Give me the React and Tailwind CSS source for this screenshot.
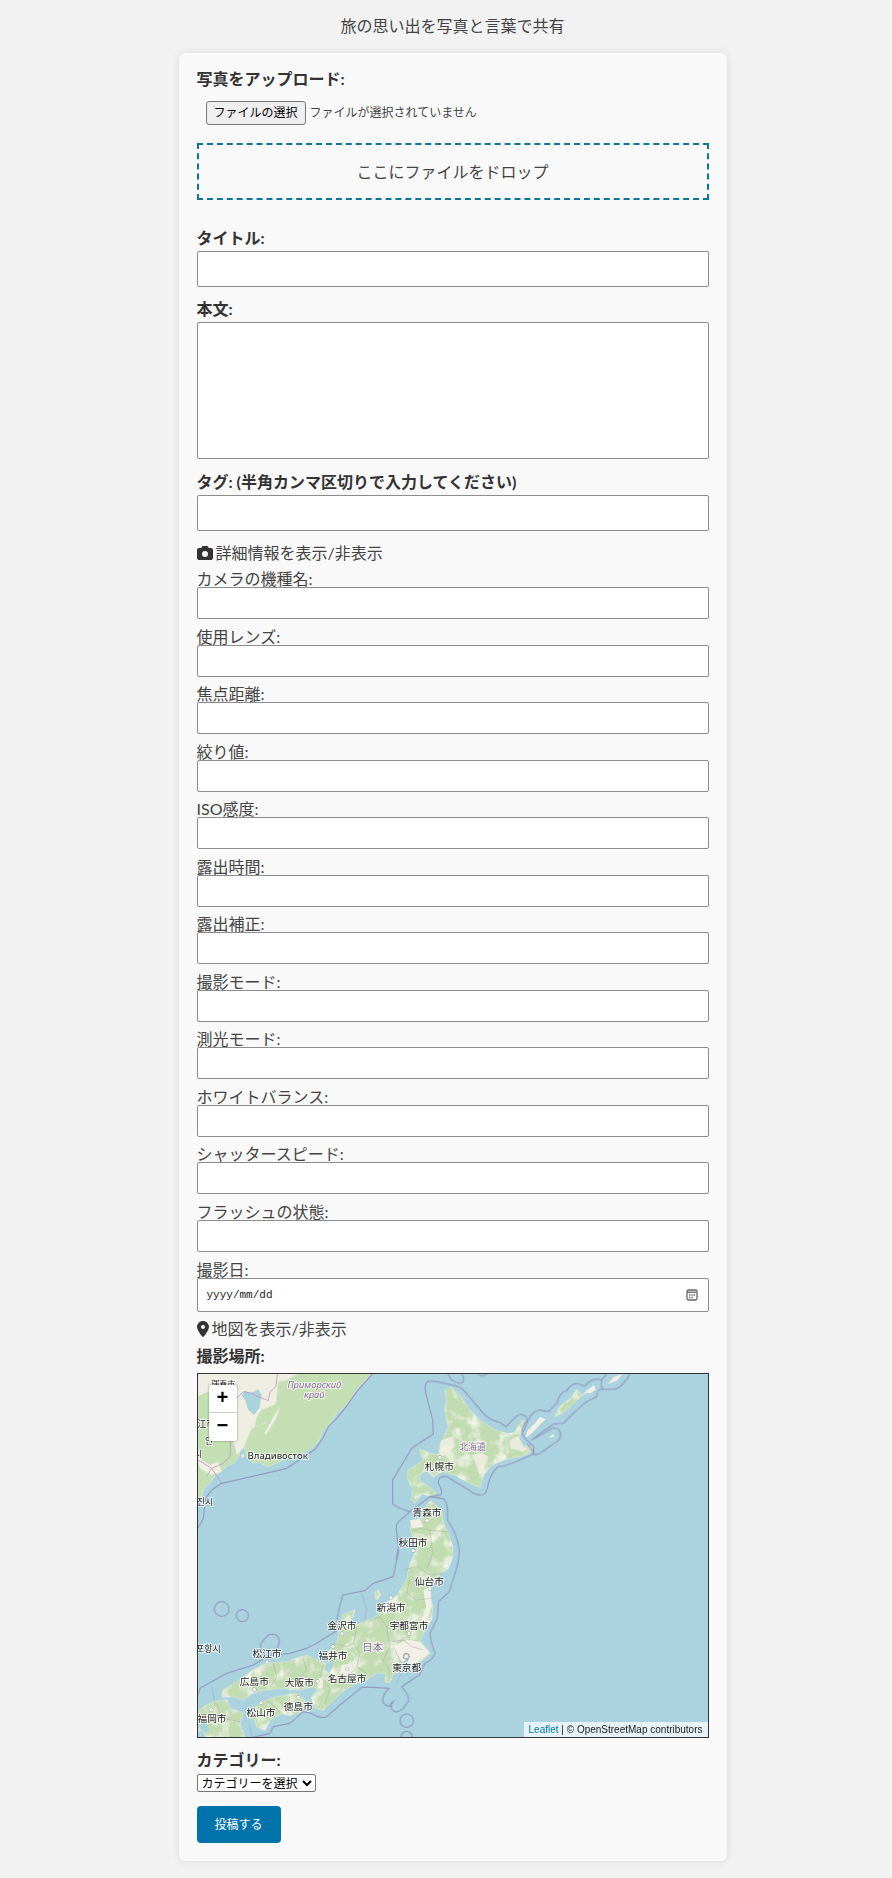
import React, { useState } from 'react';
import { FaCamera, FaLocationDot } from 'react-icons/fa6';

const DETAILS = [
  ['camera', 'カメラの機種名:'],
  ['lens', '使用レンズ:'],
  ['focal', '焦点距離:'],
  ['aperture', '絞り値:'],
  ['iso', 'ISO感度:'],
  ['exposure', '露出時間:'],
  ['compensation', '露出補正:'],
  ['mode', '撮影モード:'],
  ['metering', '測光モード:'],
  ['whitebalance', 'ホワイトバランス:'],
  ['shutter', 'シャッタースピード:'],
  ['flash', 'フラッシュの状態:'],
];

const CITIES = [
  ['札幌市', 748, 331, 750, 292],
  ['青森市', 711, 468, 711, 481],
  ['秋田市', 669, 558, 669, 572],
  ['仙台市', 718, 674, 720, 686],
  ['新潟市', 603, 754, 603, 713],
  ['宇都宮市', 657, 808, 657, 821],
  ['金沢市', 456, 808, 456, 821],
  ['松江市', 231, 892, 231, 906],
  ['福井市', 429, 898, 429, 859],
  ['東京都', 650, 933, 649, 889],
  ['名古屋市', 471, 966, 471, 927],
  ['広島市', 193, 976, 193, 989],
  ['大阪市', 328, 978, 383, 964],
  ['徳島市', 325, 1050, 325, 1012],
  ['松山市', 213, 1067, 213, 1028],
  ['福岡市', 66, 1087, 64, 1049],
];

const box = 'block w-full rounded-xs border border-[#8c8c8c] bg-white px-[9px] outline-none';
const heading = 'block font-bold leading-[18px] text-[#333]';

function Field({ id, label }) {
  return (
    <div className="pt-[9px] even:pt-2.5">
      <label htmlFor={id} className="block h-4 leading-4">{label}</label>
      <input id={id} type="text" className={`${box} relative h-8`} />
    </div>
  );
}

function CalendarIcon() {
  return (
    <svg viewBox="0 0 12 12" className="size-3" aria-hidden="true">
      <rect x="1" y="1" width="10" height="10" rx="1.5" fill="#fff" stroke="#666" strokeWidth="1.3" />
      <path d="M1 2.5H11V4H1Z" fill="#777" />
      <path d="M3.2 6H4.4M5.4 6H6.6M7.6 6H9M3.2 8.5H4.4M5.4 8.5H6.6" stroke="#555" strokeWidth="1.4" />
    </svg>
  );
}

function MapDrawing() {
  return (
    <svg viewBox="24 42 1530 1089" preserveAspectRatio="xMinYMin slice" className="block h-[363px] w-full bg-[#aad3df]" role="img" aria-label="日本">
      <defs>
        <filter id="patch" x="0" y="0" width="100%" height="100%">
          <feTurbulence type="fractalNoise" baseFrequency="0.025" numOctaves="4" seed="8" />
          <feColorMatrix values="0 0 0 0 0.94  0 0 0 0 0.94  0 0 0 0 0.86  2.6 0 0 0 -1.25" />
          <feComposite in2="SourceGraphic" operator="in" result="n" />
          <feMerge>
            <feMergeNode in="SourceGraphic" />
            <feMergeNode in="n" />
          </feMerge>
        </filter>
      </defs>
      <path fill="#c3dfb3" stroke="#d3e4cd" strokeWidth="3" d="M20 38H548L500 90L475 130L440 160L418 195L400 212L385 245L358 270L310 288L270 305L232 320L205 306L190 310L170 290L162 265L150 262L148 285L130 310L110 318L95 335L75 345L60 370L42 385L35 405L20 430Z" />
      <g fill="#c2dcb2" stroke="#d3e4cd" strokeWidth="3" strokeLinejoin="round" filter="url(#patch)">
        <path transform="translate(570 0)" d="M195 92L215 80L225 95L240 105L265 145L300 180L345 210L385 222L405 218L420 190L430 180L428 205L415 235L430 258L455 262L448 280L420 290L375 298L335 315L310 345L300 382L270 370L225 345L190 335L175 340L160 352L140 330L118 345L120 365L145 378L168 400L150 408L125 400L105 430L95 420L98 385L82 355L85 330L110 315L130 300L118 268L150 280L178 285L180 250L190 235L205 200L195 150L200 120Z" />
        <path d="M700 450L720 424L735 432L755 450L760 490L775 520L788 560L788 590L775 625L750 640L730 670L710 695L728 735L725 775L705 810L690 840L720 880L705 895L688 905L682 925L660 915L650 905L635 910L625 935L610 940L600 968L585 965L588 940L560 938L530 960L500 968L470 985L440 1010L420 1030L400 1050L375 1045L365 1010L385 990L370 980L330 990L280 985L220 990L185 1000L160 1020L130 1010L95 1010L100 990L150 960L190 930L230 910L290 905L350 885L390 905L415 910L420 870L440 850L450 810L458 765L495 748L488 772L470 790L500 795L550 775L600 735L625 700L650 660L660 610L680 570L670 540L660 500L672 480L695 476Z" />
        <path d="M170 1070L190 1050L215 1025L260 1010L320 1000L345 1020L335 1055L300 1065L275 1060L240 1080L225 1110L200 1100L195 1080Z" />
        <path d="M20 1060L40 1040L70 1025L110 1020L120 1045L160 1060L150 1090L165 1135H50L38 1110L20 1115Z" />
        <path d="M555 695L565 690L572 702L560 720L555 710Z" />
        <path transform="translate(750 0)" d="M345 170L360 140L400 108L408 88L425 105L440 98L410 120L380 150Z" />
      </g>
      <g fill="#f2efe6">
        <path opacity=".9" d="M20 38H330L290 60L265 65L258 130L235 145L225 190L185 205L160 265L140 285L130 240L57 230L30 190H20Z" />
        <path d="M262 150L270 140L258 175L240 205L228 222L222 220L240 190Z" />
        <path d="M20 290L60 315L85 305L95 335L60 345L30 325Z" />
        <path d="M755 240L790 228L795 260L770 285L745 290ZM845 285L875 278L895 290L880 335L868 342L855 305ZM960 240L985 228L1000 260L1015 265L1000 275L960 265Z" opacity=".8" />
        <path d="M615 855L650 840L690 845L720 880L685 905L660 912L635 905L615 875Z" />
        <path d="M455 915L485 910L490 930L465 955L450 940ZM385 955L400 950L398 985L382 985ZM700 690L722 680L725 740L705 800L695 780L708 740ZM590 725L625 705L615 745L580 765ZM660 480L690 478L700 500L665 505Z" />
        <path transform="translate(750 0)" d="M255 235L262 212L285 190L300 170L317 178L298 196L276 220ZM432 98L462 75L467 90L450 100ZM503 72L522 50L548 42L530 62ZM325 233L340 221L343 230Z" />
      </g>
      <path fill="#c3dfb3" d="M20 110L55 95L60 140L90 170L130 240L110 290L70 300L40 270L20 260ZM215 150L255 135L235 165L222 190L195 202L200 170Z" />
      <g fill="#aad3df">
        <path d="M155 105L165 93L185 98L205 88L215 105L208 145L192 165L175 150L165 120Z" />
        <path d="M408 912L425 900L430 915L418 940L405 930ZM640 905L655 895L650 925L640 935ZM30 1085L50 1092L60 1110L45 1120L28 1105Z" />
      </g>
      <g fill="none" stroke="#a3a08f" strokeOpacity=".55" strokeWidth="2" strokeLinejoin="round">
        <path d="M665 515L690 505L730 512L775 515M720 510L728 580L712 625M640 630L680 620L720 645L760 640M660 655L650 700L680 720L728 715M540 780L570 770L590 800L620 790L655 820L690 800M500 800L490 850L510 880L500 920L530 940M590 800L600 860L580 900L600 935M430 850L470 860L490 850M250 910L260 950L240 985M340 895L350 930L320 960L335 985M400 915L390 950L420 985L405 1030M190 935L180 975L150 1000M230 1020L270 1055M300 1010L290 1060M80 1030L95 1075L150 1085" />
      </g>
      <g fill="none" stroke="#b98fb5" strokeOpacity=".7" strokeWidth="3">
        <path d="M262 42L258 80L240 95L235 122L205 110L185 100L160 95L140 115M130 220L122 245L120 290L100 310L65 325L95 370M24 300L65 325L50 350" />
        <path opacity=".6" d="M605 845L640 840L665 860L700 870M615 870L635 910" />
      </g>
      <g fill="none" stroke="#8f90bd" strokeOpacity=".85" strokeWidth="3.5" strokeLinejoin="round">
        <path d="M547 42L500 95L465 145L440 175L415 200L400 232L375 268L310 312L290 325L250 335L95 370L65 390L47 415L40 475L24 505" />
        <path transform="translate(570 0)" d="M90 455L60 445L38 432L38 360L95 265L125 245L160 222L158 180L140 110Q130 75 142 65Q150 58 215 75Q240 78 255 95L310 160Q325 178 360 188L378 200L410 168Q430 155 443 178Q443 195 425 220L440 240L462 260L460 282L420 300Q365 322 355 320Q335 335 325 370Q320 408 300 405Q275 400 270 392L200 350Q175 345 175 370Q190 395 182 405L150 410L90 455L55 485Q45 495 50 515L55 560L50 600" />
        <path d="M720 410L755 415Q775 415 772 480Q800 520 806 560Q812 590 795 640L778 695L745 725L742 775L720 820Q720 840 735 880Q728 900 705 910L688 945L650 970L635 980Q660 1010 655 1025Q645 1035 640 1045Q620 1065 605 1048L602 1030L612 1022L600 1040Q575 1035 578 1015Q585 995 598 985L550 982L515 982L450 1035L410 1070Q390 1078 365 1060L340 1055L300 1090L250 1100L240 1120L185 1133" />
        <path d="M620 600L625 570L610 650L550 670L525 692L458 705L442 770L440 812L380 850L350 865L300 880L255 885L230 890L190 915L110 940L30 985L22 1010" />
        <path d="M230 890Q208 880 212 850L235 825Q260 815 268 840Q270 860 245 880" />
        <path strokeWidth="2" opacity=".6" d="M515 700L530 750L520 790M65 980L75 1030M178 1095L185 1133M620 965L640 930L665 960" />
        <circle cx="95" cy="747" r="22" />
        <circle cx="157" cy="767" r="18" />
        <circle cx="650" cy="1082" r="20" />
        <circle cx="650" cy="1131" r="17" />
        <g transform="translate(750 0)">
          <path d="M245 215Q250 190 265 180Q280 150 300 150L325 155L350 130Q360 95 380 92Q400 60 425 75L435 78Q455 50 485 60L500 42M570 42Q545 85 525 87L490 88Q480 80 485 60M490 88Q470 85 470 110L440 125L410 150L370 190L340 192L300 220L275 240L335 205Q360 200 362 225Q360 240 350 245L300 280L285 285L262 250M25 42Q30 65 60 70Q80 65 65 42M112 42Q128 52 142 42" />
        </g>
      </g>
      <g fontFamily="'Noto Sans CJK JP', 'Noto Sans', sans-serif" fontSize="29" textAnchor="middle" fill="#222" stroke="#fff" strokeOpacity=".75" strokeWidth="6" strokeLinejoin="round" paintOrder="stroke">
        {CITIES.map(([name, x, y, cx, cy]) => (
          <g key={name}>
            <circle cx={cx} cy={cy} r="5" fill="#fff" stroke="#777" strokeOpacity="1" strokeWidth="2" />
            <text x={x} y={y}>{name}</text>
          </g>
        ))}
        <circle cx="649" cy="889" r="9" fill="none" stroke="#444" strokeWidth="2" />
        <circle cx="158" cy="288" r="5" fill="#fff" stroke="#777" strokeWidth="2" />
        <text x="263" y="297" fontSize="29" fontFamily="'Noto Sans', sans-serif">Владивосток</text>
        <g fill="#8a6795" fontSize="28">
          <text x="373" y="83" fontStyle="italic" fontFamily="'Noto Sans', sans-serif">Приморский</text>
          <text x="373" y="115" fontStyle="italic" fontFamily="'Noto Sans', sans-serif">край</text>
          <text x="848" y="271" fontSize="26">北海道</text>
          <text x="548" y="872" fontSize="31">日本</text>
        </g>
        <g textAnchor="start" fontFamily="'Noto Sans CJK KR', sans-serif" fontSize="27">
          <text x="20" y="435">진시</text>
          <text x="18" y="875">포항시</text>
          <text x="45" y="251">안</text>
          <text x="22" y="200">江市</text>
          <text x="12" y="290">시</text>
        </g>
        <text x="100" y="82" fontSize="24">琿春市</text>
      </g>
    </svg>
  );
}

export default function App() {
  const [showDetails, setShowDetails] = useState(true);
  const [showMap, setShowMap] = useState(true);
  return (
    <div className="min-h-screen bg-[#f2f2f2] pb-[17px] pl-[13px] font-['Lato','Noto_Sans_CJK_JP',sans-serif] text-base text-[#444]">
      <p className="pt-3.5 text-center leading-6">旅の思い出を写真と言葉で共有</p>
      <form onSubmit={(e) => e.preventDefault()} className="mx-auto mt-[15px] w-full max-w-[548px] rounded-md bg-[#f9f9f9] p-[18px] pt-[17px] shadow-[0_0_10px_rgba(0,0,0,0.1)]">
        <label htmlFor="photo" className={heading}>写真をアップロード:</label>
        <div className="ml-[9px] mt-[13px] flex items-center gap-1 text-xs leading-4">
          <input id="photo" type="file" className="sr-only" />
          <label htmlFor="photo" className="flex h-6 items-center rounded-[3px] border border-[#767676] bg-[#efefef] px-[7px] text-black">ファイルの選択</label>
          <span>ファイルが選択されていません</span>
        </div>
        <div className="mt-[18px] flex h-[57px] items-center justify-center border-2 border-dashed border-[#0a7599]">ここにファイルをドロップ</div>

        <label htmlFor="title" className={`${heading} mt-[29px]`}>タイトル:</label>
        <input id="title" type="text" className={`${box} mt-1 h-9`} />
        <label htmlFor="body" className={`${heading} mt-[13px]`}>本文:</label>
        <textarea id="body" className={`${box} mt-1 h-[137px] resize-none`} />
        <label htmlFor="tags" className={`${heading} mt-3.5`}>タグ: (半角カンマ区切りで入力してください)</label>
        <input id="tags" type="text" className={`${box} mt-1 h-9`} />

        <button type="button" onClick={() => setShowDetails(!showDetails)} className="mt-2.5 flex h-6 items-center gap-[3px]">
          <FaCamera className="size-4 text-[#333]" />
          詳細情報を表示/非表示
        </button>
        {showDetails && (
          <div className="-mt-[3px]">
            {DETAILS.map(([id, label]) => <Field key={id} id={id} label={label} />)}
            <label htmlFor="date" className="mt-2.5 block h-4 leading-4">撮影日:</label>
            <div className="relative">
              <input id="date" type="text" placeholder="yyyy/mm/dd" className={`${box} h-[34px] font-['Liberation_Mono',monospace] text-[11px] placeholder:text-[#222]`} />
              <button type="button" aria-label="カレンダー" className="absolute inset-y-0 right-[11px]">
                <CalendarIcon />
              </button>
            </div>
          </div>
        )}

        <button type="button" onClick={() => setShowMap(!showMap)} className="mt-[5px] flex h-6 items-center gap-[3px]">
          <FaLocationDot className="h-4 w-3 text-[#333]" />
          地図を表示/非表示
        </button>
        <h2 className={`${heading} mt-1.5`}>撮影場所:</h2>
        {showMap && (
          <div className="relative mt-2 overflow-hidden border border-[#333]">
            <MapDrawing />
            <div className="absolute left-[11px] top-[11px] flex w-7 flex-col overflow-hidden rounded-xs bg-white font-['Liberation_Mono',monospace] text-xl font-bold text-black shadow-[0_0_2px_rgba(0,0,0,0.5)]">
              <button type="button" aria-label="拡大" className="h-7 border-b border-[#ccc] leading-7">+</button>
              <button type="button" aria-label="縮小" className="h-7 leading-7">−</button>
            </div>
            <p className="absolute bottom-0 right-0 bg-white/70 px-[5px] font-['Liberation_Sans',sans-serif] text-[10px] leading-[15px] text-[#222]">
              <a href="https://leafletjs.com" className="text-[#0078a8]">Leaflet</a> | © OpenStreetMap contributors
            </p>
          </div>
        )}

        <label htmlFor="category" className={`${heading} mt-[13px]`}>カテゴリー:</label>
        <select id="category" className="mt-[5px] block h-[18px] rounded-xs border border-[#767676] bg-white text-xs leading-4 text-black">
          <option>カテゴリーを選択</option>
        </select>
        <button type="submit" className="mt-3.5 block h-[37px] rounded-sm bg-[#0073aa] px-[18px] text-xs text-white">投稿する</button>
      </form>
    </div>
  );
}
